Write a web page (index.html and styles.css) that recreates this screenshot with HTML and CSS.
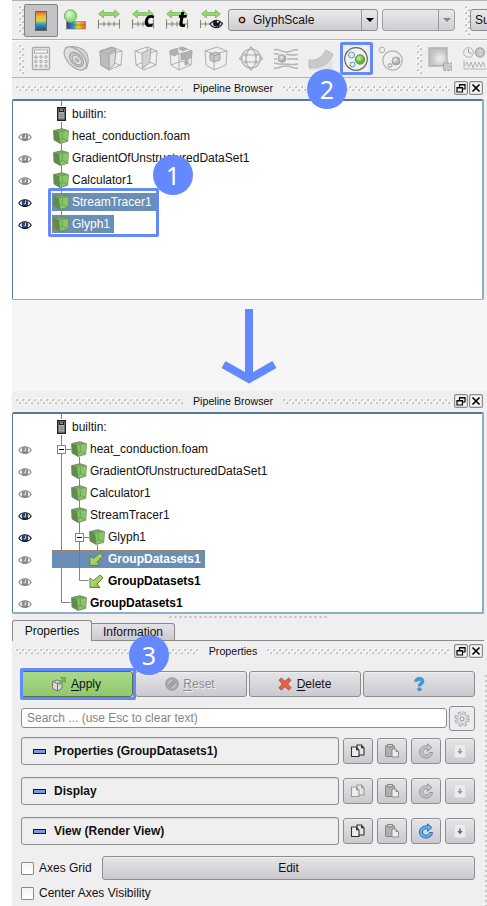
FILE: index.html
```html
<!DOCTYPE html>
<html lang="en">
<head>
<meta charset="utf-8">
<title>Pipeline Browser</title>
<link rel="stylesheet" href="styles.css">
</head>
<body>
<svg class="defs" width="0" height="0">
  <defs>
    <linearGradient id="rainbow" x1="0" y1="0" x2="0" y2="1"><stop offset="0" stop-color="#e85a2c"/><stop offset=".25" stop-color="#f5b53c"/><stop offset=".48" stop-color="#c9d84e"/><stop offset=".68" stop-color="#2aa0b8"/><stop offset="1" stop-color="#2c3c9c"/></linearGradient>
    <linearGradient id="rainbowH"><stop offset="0" stop-color="#2c3c9c"/><stop offset=".35" stop-color="#2a90c8"/><stop offset=".6" stop-color="#e8d040"/><stop offset="1" stop-color="#e8602c"/></linearGradient>
    <linearGradient id="greenArrow" x1="0" y1="0" x2="1" y2="1"><stop offset="0" stop-color="#c6ec86"/><stop offset="1" stop-color="#86b83c"/></linearGradient>
    <radialGradient id="steel" cx=".6" cy=".6"><stop offset="0" stop-color="#f0f0f0"/><stop offset="1" stop-color="#c2c2c2"/></radialGradient>
    <radialGradient id="ball" cx=".4" cy=".35"><stop offset="0" stop-color="#c4f5a0"/><stop offset="1" stop-color="#58b038"/></radialGradient>
    <radialGradient id="paleBall" cx=".4" cy=".35"><stop offset="0" stop-color="#dcffd0"/><stop offset="1" stop-color="#90d878"/></radialGradient>
    <radialGradient id="grayBall" cx=".4" cy=".35"><stop offset="0" stop-color="#eeeeee"/><stop offset="1" stop-color="#aaaaaa"/></radialGradient>
  </defs>
  <symbol id="cube" viewBox="0 0 16 16">
    <path d="M.6 2.600 9 .7l6.400 2-.7 10.600L7 15.400 1 12z" fill="#5f8c4b" stroke="#71876a" stroke-width=".9"/>
    <path d="M.9 2.800 9 1l6 1.800L5.800 4.600z" fill="#78a85e"/>
    <path d="M5.800 4.600 15.200 3l-.6 10.100L7 15.100z" fill="#86c865"/>
    <path d="M5.800 4.600 7 15M5.800 4.600.9 2.800M9.300 4.500v6l5 2M9.300 10.500 7 12" fill="none" stroke="#5f8c4b" stroke-width=".7"/>
  </symbol>
  <symbol id="server" viewBox="0 0 9 14">
    <path d="M.7.700h7.600v12.600H.7z" fill="#aaa" stroke="#222" stroke-width="1.400"/>
    <path d="M2 2h5v3H2z" fill="#222"/><path d="M3 2.600h3v1H3z" fill="#ddd"/><path d="M2.500 7.500h4M2.500 9.500h4M2.500 11.500h4" stroke="#777" stroke-width=".8"/>
  </symbol>
  <symbol id="eye" viewBox="0 0 14 10">
    <path d="M.8 5.200C3.500.6 10.500.6 13.200 5.200 10.500 9.400 3.500 9.400.8 5.200z" fill="#fff" stroke="currentColor" stroke-width="1.100"/>
    <circle cx="7" cy="5" r="3.300" fill="var(--iris)"/><path d="M7.500 2.500v3.300H5.700" stroke="#fff" stroke-width=".9" fill="none" opacity=".8"/><path d="M4 7.300c2 1.200 4 1.200 6 0" stroke="currentColor" fill="none"/>
  </symbol>
  <symbol id="branch" viewBox="0 0 15 15">
    <path d="M11 1 14 4 8 10l3 3.500H1V4l3.200 2.700z" fill="url(#greenArrow)" stroke="#64823a"/>
  </symbol>
  <symbol id="range" viewBox="0 0 24 22">
    <path d="M1.500 5 6.500 1v2.500h11V1L22.500 5l-5 4V6.500h-11V9z" fill="#8cdc66" stroke="#86ac78" stroke-width=".8"/>
    <path d="M1.500 10.500v9M22.500 10.500v9M1 15h22M7 12.500v5M12 12.500v5M17 12.500v5" stroke="#85857a" stroke-width="1.100" fill="none"/>
  </symbol>
  <symbol id="dock" viewBox="0 0 14 14">
    <rect x=".6" y=".6" width="12.800" height="12.800" rx="1.500" fill="#f3f3f3" stroke="#8a8a8a" stroke-width="1.200"/>
    <path d="M5.500 6V3.500h5.500V8H8.800M5.500 3.800H11M3 6.500h5.500v4.500H3zM3 6.900h5.500" fill="none" stroke="#000" stroke-width="1.200"/>
  </symbol>
  <symbol id="close" viewBox="0 0 14 14">
    <rect x=".6" y=".6" width="12.800" height="12.800" rx="1.500" fill="#f3f3f3" stroke="#8a8a8a" stroke-width="1.200"/>
    <path d="M3.500 3.500l7 7M10.500 3.500l-7 7" stroke="#000" stroke-width="1.700"/>
  </symbol>
  <symbol id="copy" viewBox="0 0 16 16">
    <path d="M7 2h4.500l2.500 3v7H7z" fill="#e5e5e2" stroke="currentColor" stroke-width="1.100"/><path d="M11 2v3.200h3z" fill="currentColor"/>
    <path d="M1.500 4h4.500l3 3v6.500H1.500z" fill="#eeeeea" stroke="currentColor" stroke-width="1.100"/><path d="M6 4v3.200h3z" fill="currentColor"/>
  </symbol>
  <symbol id="paste" viewBox="0 0 16 16">
    <rect x="1.500" y="2.500" width="9" height="11" rx="1" fill="#b0b0b0" stroke="#858585"/><path d="M3.500 1.500h5v2.500h-5z" fill="#ccc" stroke="#858585"/>
    <path d="M8 6h3.500l3 3v5H8z" fill="#eee" stroke="#8c8c8c" stroke-width="1"/><path d="M11.500 6v3h3z" fill="#8c8c8c"/>
  </symbol>
  <symbol id="reload" viewBox="0 0 16 16">
    <path d="M9.500.8v2C5 2.500 1.500 5 1.500 9s3 6 6.500 6 6.300-2.300 6.500-5.500h-3c-.3 1.800-1.600 2.700-3.400 2.700-2 0-3.500-1.300-3.500-3.200 0-2.300 2-3.600 4.900-3.300v2.600L14 4.600z" fill="var(--fill)" stroke="var(--edge)" stroke-width=".9"/>
  </symbol>
  <symbol id="save" viewBox="0 0 12 14">
    <path d="M.5.500h11v13H.5z" fill="#ececee" stroke="#dcdcdf"/><path d="M5.200 4.500h1.600v2.500h2L6 10.300 3.200 7h2z" fill="currentColor"/>
  </symbol>
</svg>

<div class="app">
  <div class="toolbar toolbar-top">
    <span class="grip"></span>
    <span class="toggle"><svg width="12" height="20"><rect x=".5" y=".5" width="11" height="19" fill="url(#rainbow)" stroke="#666"/></svg></span>
    <span class="cell"><svg width="24" height="22" viewBox="0 0 24 22"><rect x="3.500" y="12.500" width="19" height="7.500" fill="url(#rainbowH)" stroke="#8a7a60" stroke-width=".6"/><path d="M3.500 16h19" stroke="#555" stroke-width=".5"/><circle cx="7.500" cy="7" r="6.200" fill="url(#paleBall)" stroke="#7ab070"/></svg></span>
    <span class="cell"><svg width="24" height="22"><use href="#range"/></svg></span>
    <span class="cell"><svg width="24" height="22"><use href="#range"/></svg><b class="mark">c</b></span>
    <span class="cell"><svg width="24" height="22"><use href="#range"/></svg><b class="mark">t</b></span>
    <span class="cell"><svg width="24" height="22" viewBox="0 0 24 22"><path d="M2.500 5 7.500 1v2.500h9V1l5 4-5 4V6.500h-9V9z" fill="#8cdc66" stroke="#86ac78" stroke-width=".8"/><path d="M1.500 11v8M1 15h10M6.500 12.500v5" stroke="#85857a" fill="none"/><path d="M11 15c3-4.500 9-4.500 12.500-.5-3 5.500-9.500 5.500-12.500.5z" fill="#ddd" stroke="#222" stroke-width="1.200"/><circle cx="17.500" cy="14.300" r="3.500" fill="#181818"/><circle cx="18.800" cy="12.800" r="1" fill="#fff"/></svg></span>
    <span class="combo combo-main"><svg class="dot" width="8" height="8"><circle cx="4" cy="4" r="2.700" fill="#ffb97a" stroke="#2c1a10" stroke-width="1.300"/></svg><span class="combo-text">GlyphScale</span><i class="drop"></i></span>
    <span class="combo combo-empty"><span class="combo-text"></span><i class="drop drop-off"></i></span>
    <span class="grip grip-mid"></span>
    <span class="combo combo-cut">Su</span>
  </div>

  <div class="toolbar toolbar-filters">
    <span class="grip"></span>
    <span class="cell"><svg width="20" height="26" viewBox="0 0 20 26"><rect x="1.500" y="1.500" width="17" height="22" rx="1" fill="#eee" stroke="#aaa" stroke-width="1.300"/><rect x="3.500" y="4" width="13" height="3" fill="#fff" stroke="#aaa"/><g fill="#fff" stroke="#aaa"><path d="M4 10h2v2H4zM9 10h2v2H9zM14 10h2v2h-2zM4 14.500h2v2H4zM9 14.500h2v2H9zM14 14.500h2v2h-2zM4 19h2v2H4zM9 19h2v2H9zM14 19h2v2h-2z"/></g></svg></span>
    <span class="cell"><svg width="26" height="26" viewBox="0 0 26 26"><path d="M2 2C8-1 19 1 23 6c3 5 3 12 0 17z" fill="#d2d2d2" stroke="#a4a4a4"/><ellipse cx="12.300" cy="12.500" rx="8" ry="14" transform="rotate(-43 12.300 12.500)" fill="#dedede" stroke="#a0a0a0"/><ellipse cx="13.500" cy="13.500" rx="5.500" ry="8.500" transform="rotate(-43 13.500 13.500)" fill="#c6c6c6" stroke="#a0a0a0"/><ellipse cx="14" cy="14" rx="3.500" ry="5.500" transform="rotate(-43 14 14)" fill="#e4e4e4" stroke="#a0a0a0"/><ellipse cx="14" cy="14" rx="1.300" ry="2.500" transform="rotate(-43 14 14)" fill="#bbb" stroke="#a0a0a0" stroke-width=".7"/></svg></span>
    <span class="cell"><svg width="24" height="26" viewBox="0 0 24 26"><path d="M1 5 13 1l10 4-1 14-12 5-8-5z" fill="#efefef" stroke="#b0b0b0"/><path d="M1 5 13 1.500l4 2L15 17l-5 7-8-5z" fill="#bcbcbc" stroke="#a4a4a4"/><path d="M10 7.500l7-3.500L15.500 18l-5.500 6z" fill="#dcdcdc" stroke="#a4a4a4"/><path d="M1 5l9 3 13-3M10 8v16M15.500 17l6.500 2.500" fill="none" stroke="#b0b0b0"/></svg></span>
    <span class="cell"><svg width="24" height="26" viewBox="0 0 24 26"><path d="M1 5 13 1l10 4-1 14-12 5-8-5zM1 5l9 3 13-3M10 8v16M13 1v14l9 4M13 15 2 19" fill="#efefef" stroke="#b0b0b0"/><path d="M8 7l9-4-1.500 14-7 5z" fill="#d2d2d2" stroke="#a4a4a4" opacity=".9"/></svg></span>
    <span class="cell"><svg width="24" height="26" viewBox="0 0 24 26"><path d="M1 5 13 1l10 4-1 14-12 5-8-5zM1 5l9 3 13-3M10 8v16M13 15l9 4M13 15 2 19" fill="#efefef" stroke="#b0b0b0"/><path d="M1 4.500l6-1.500 2 1v4l-4 2-4-2zM12 8l11-3.500-1 7-3 1.500v5l-3 1v-6l-4 1zM10 3l3-1.500 5 1.500-4 2z" fill="#b2b2b2" stroke="#a0a0a0" stroke-width=".7"/></svg></span>
    <span class="cell"><svg width="24" height="26" viewBox="0 0 24 26"><path d="M1 5 13 1l10 4-1 14-12 5-8-5zM1 5l9 3 13-3M10 8v16" fill="#efefef" stroke="#b0b0b0"/><path d="M6 8l6-2 4 2v6l-6 2-4-2z" fill="#cacaca" stroke="#a0a0a0"/><path d="M6 8l4 1.500L16 8M10 9.500V16" fill="none" stroke="#a0a0a0"/></svg></span>
    <span class="cell"><svg width="26" height="26" viewBox="0 0 26 26"><g fill="none" stroke="#b0b0b0" stroke-width="1.200"><circle cx="13" cy="12.500" r="9.500"/><ellipse cx="13" cy="12.500" rx="5" ry="9.500"/><path d="M4 9h18M4 16h18"/></g><g fill="#e4e4e4" stroke="#a4a4a4"><path d="M13 .5l2 2.700h-4zM13 24.500l2-2.700h-4zM1 12.500l2.700-2v4zM25 12.500l-2.700-2v4z"/><circle cx="8" cy="9" r="1.200"/><circle cx="18" cy="9" r="1.200"/><circle cx="8" cy="16" r="1.200"/><circle cx="18" cy="16" r="1.200"/></g></svg></span>
    <span class="cell"><svg width="26" height="24" viewBox="0 0 26 24"><g fill="none" stroke="#b4b4b4" stroke-width="1.500"><path d="M1 3c4-2 7 2 12 2s7-3 12-2M1 7c3-1 4 0 5 .5M13 7c4 1.500 7 1 12 .5M1 12h3M14 12h11M1 16c5 1 6 1.500 9 1s9 1.500 15 0M1 21c4 1 7-2 12-2s7 3 12 2"/></g><circle cx="9" cy="11.500" r="3.800" fill="url(#grayBall)" stroke="#a4a4a4"/></svg></span>
    <span class="cell"><svg width="26" height="24" viewBox="0 0 26 24"><path d="M1 14h24v9H1z" fill="#e3e3e3"/><path d="M1 13c7 1 13-2 17-10l7 4c-2 8-9 14-24 14z" fill="#cacaca" stroke="#bcbcbc"/></svg></span>
    <span class="cell"><svg width="26" height="26" viewBox="0 0 26 26"><circle cx="13" cy="13" r="11.300" fill="#f2f2ee" stroke="#67675a" stroke-width="1.200"/><circle cx="8.500" cy="9" r="3" fill="#d6effc" stroke="#6a94ae"/><circle cx="9.500" cy="18.500" r="2.500" fill="#d6effc" stroke="#6a94ae"/><circle cx="17" cy="13.500" r="4.700" fill="url(#ball)" stroke="#589044"/></svg></span>
    <span class="cell"><svg width="26" height="26" viewBox="0 0 26 26"><circle cx="14.500" cy="14.500" r="9.700" fill="#efefef" stroke="#b0b0b0" stroke-width="1.200"/><circle cx="4" cy="4" r="2.800" fill="#eee" stroke="#b0b0b0"/><circle cx="12" cy="19.500" r="2" fill="#ddd" stroke="#a4a4a4"/><circle cx="18" cy="15" r="4" fill="url(#grayBall)" stroke="#a4a4a4"/></svg></span>
    <span class="grip grip-end"></span>
    <span class="cell"><svg width="26" height="26" viewBox="0 0 26 26"><path d="M2 2h18v18H2z" fill="url(#steel)" stroke="#b0b0b0" stroke-width="1.300"/><path d="M16.500 17h8v7.500h-8z" fill="#c8c8c8" stroke="#999" stroke-dasharray="2 1.500"/></svg></span>
    <span class="cell"><svg width="26" height="26" viewBox="0 0 26 26"><circle cx="6.500" cy="6.500" r="4.800" fill="#eee" stroke="#b0b0b0"/><path d="M6.500 3v3.500l3 1" fill="none" stroke="#999"/><circle cx="18" cy="6.500" r="4.800" fill="#bbb" stroke="#a4a4a4"/><path d="M15 5h6M15 8h6M18 2.500v8" stroke="#ddd"/><path d="M2 14v9h24M3 20l2-4 2 5 2-5 2 6 2-6 2 5 2-5 2 5 2-5 2 5" fill="none" stroke="#b4b4b4"/></svg></span>
  </div>

  <div class="dock-title"><span class="ridge"></span><span class="title-text">Pipeline Browser</span><span class="ridge"></span><svg width="14" height="14"><use href="#dock"/></svg><svg width="14" height="14"><use href="#close"/></svg></div>

  <div class="tree">
    <svg class="links" width="100" height="190"><path d="M48.500 0v120" fill="none" stroke="#848484"/></svg>
    <div class="row"><span class="eye"></span><span class="item"><svg class="srv" width="9" height="14"><use href="#server"/></svg>builtin:</span></div>
    <div class="row"><svg class="eye" width="14" height="10"><use href="#eye"/></svg><span class="item"><svg width="16" height="16"><use href="#cube"/></svg>heat_conduction.foam</span></div>
    <div class="row"><svg class="eye" width="14" height="10"><use href="#eye"/></svg><span class="item"><svg width="16" height="16"><use href="#cube"/></svg>GradientOfUnstructuredDataSet1</span></div>
    <div class="row"><svg class="eye" width="14" height="10"><use href="#eye"/></svg><span class="item"><svg width="16" height="16"><use href="#cube"/></svg>Calculator1</span></div>
    <div class="row"><svg class="eye on" width="14" height="10"><use href="#eye"/></svg><span class="item picked"><svg width="16" height="16"><use href="#cube"/></svg>StreamTracer1</span></div>
    <div class="row"><svg class="eye on" width="14" height="10"><use href="#eye"/></svg><span class="item picked focus"><svg width="16" height="16"><use href="#cube"/></svg>Glyph1</span></div>
  </div>

  <div class="between"><svg width="56" height="76" viewBox="0 0 56 76"><path d="M28 0v70M2.500 55.500 28 70l25.500-14.500" fill="none" stroke="#6489ff" stroke-width="8"/></svg></div>

  <div class="dock-title"><span class="ridge"></span><span class="title-text">Pipeline Browser</span><span class="ridge"></span><svg width="14" height="14"><use href="#dock"/></svg><svg width="14" height="14"><use href="#close"/></svg></div>

  <div class="tree tree-grouped">
    <svg class="links" width="110" height="198"><path d="M48.500 0v188.500h9M52 35.500h6M66.500 43v80M66.500 123v43.500h9M70 123.500h6M84.500 131v8" fill="none" stroke="#848484"/></svg>
    <div class="row"><span class="eye"></span><span class="item"><svg class="srv" width="9" height="14"><use href="#server"/></svg>builtin:</span></div>
    <div class="row"><svg class="eye" width="14" height="10"><use href="#eye"/></svg><span class="item deep1"><i class="fold"></i><svg width="16" height="16"><use href="#cube"/></svg>heat_conduction.foam</span></div>
    <div class="row"><svg class="eye" width="14" height="10"><use href="#eye"/></svg><span class="item deep1"><svg width="16" height="16"><use href="#cube"/></svg>GradientOfUnstructuredDataSet1</span></div>
    <div class="row"><svg class="eye" width="14" height="10"><use href="#eye"/></svg><span class="item deep1"><svg width="16" height="16"><use href="#cube"/></svg>Calculator1</span></div>
    <div class="row"><svg class="eye on" width="14" height="10"><use href="#eye"/></svg><span class="item deep1"><svg width="16" height="16"><use href="#cube"/></svg>StreamTracer1</span></div>
    <div class="row"><svg class="eye on" width="14" height="10"><use href="#eye"/></svg><span class="item deep2"><i class="fold"></i><svg width="16" height="16"><use href="#cube"/></svg>Glyph1</span></div>
    <div class="row"><svg class="eye" width="14" height="10"><use href="#eye"/></svg><span class="item deep2 strong picked focus"><i class="trunk"></i><svg width="15" height="15"><use href="#branch"/></svg>GroupDatasets1</span></div>
    <div class="row"><svg class="eye" width="14" height="10"><use href="#eye"/></svg><span class="item deep2 strong"><svg width="15" height="15"><use href="#branch"/></svg>GroupDatasets1</span></div>
    <div class="row"><svg class="eye" width="14" height="10"><use href="#eye"/></svg><span class="item deep1 strong"><svg width="16" height="16"><use href="#cube"/></svg>GroupDatasets1</span></div>
  </div>

  <div class="splitter"></div>
  <div class="tabs"><span class="tab active">Properties</span><span class="tab">Information</span><span class="tab-rest"></span></div>
  <div class="dock-title props-title"><span class="ridge"></span><span class="title-text">Properties</span><span class="ridge"></span><svg width="14" height="14"><use href="#dock"/></svg><svg width="14" height="14"><use href="#close"/></svg></div>

  <div class="panel">
    <div class="form">
      <div class="actions">
        <span class="btn apply"><svg width="16" height="16" viewBox="0 0 16 16"><path d="M1.500 5.500 6 4l5 1.500v7L6.500 15l-5-2.500z" fill="#d9d9cf" stroke="#777766"/><path d="M1.500 5.500l5 2 4.500-2M6.500 7.500V15" fill="none" stroke="#777766"/><path d="M7.500 7.500l4-4-2-2h5v5l-1.800-1.800-4 4z" fill="#68c254" stroke="#559548" stroke-width=".7"/></svg><span><u>A</u>pply</span></span>
        <span class="btn reset"><svg width="14" height="14" viewBox="0 0 14 14"><circle cx="7" cy="7" r="6.300" fill="#aaa" stroke="#999"/><circle cx="7" cy="7" r="3.900" fill="#c4c4c4"/><path d="M3.500 9l5.500-5.500M5 10.500 10.500 5" stroke="#8f8f8f" stroke-width="1.400"/></svg><span><u>R</u>eset</span></span>
        <span class="btn delete"><svg width="14" height="14" viewBox="0 0 14 14"><path d="M1 3.300 3.300 1 7 4.400 10.700 1 13 3.300 9.600 7l3.400 3.700L10.700 13 7 9.600 3.300 13 1 10.700 4.400 7z" fill="#f0603e" stroke="#9c5444"/></svg><span><u>D</u>elete</span></span>
        <span class="btn"><svg width="11" height="15" viewBox="0 0 12 16"><path d="M2.200 5C2 .8 9.500.8 9.300 4.700 9.200 7.200 6 6.800 6 10" fill="none" stroke="#6c8296" stroke-width="4"/><path d="M2.200 5C2 .8 9.500.8 9.300 4.700 9.200 7.200 6 6.800 6 10" fill="none" stroke="#28a4ee" stroke-width="2.700"/><ellipse cx="6" cy="13.300" rx="2.200" ry="1.700" fill="#28a4ee" stroke="#6c8296" stroke-width=".8"/></svg></span>
      </div>
      <div class="search-line">
        <div class="search">Search ... (use Esc to clear text)</div>
        <span class="btn gear"><svg width="16" height="16" viewBox="0 0 16 16"><circle cx="8" cy="8" r="6.200" fill="none" stroke="#9aa3aa" stroke-width="3" stroke-dasharray="3 1.870"/><circle cx="8" cy="8" r="5.200" fill="#dde2e6" stroke="#9aa3aa" stroke-width=".8"/><circle cx="8" cy="8" r="5.900" fill="none" stroke="#dde2e6" stroke-width="2" stroke-dasharray="1.700 2.934" stroke-dashoffset="-.6"/><circle cx="8" cy="8" r="2" fill="#f7f7f7" stroke="#8d949a"/></svg></span>
      </div>
      <div class="group"><div class="group-head"><i class="minus"></i>Properties (GroupDatasets1)</div><span class="btn tool dark"><svg width="16" height="16"><use href="#copy"/></svg></span><span class="btn tool"><svg width="16" height="16"><use href="#paste"/></svg></span><span class="btn tool"><svg width="16" height="16"><use href="#reload"/></svg></span><span class="btn tool"><svg width="12" height="14"><use href="#save"/></svg></span></div>
      <div class="group"><div class="group-head"><i class="minus"></i>Display</div><span class="btn tool"><svg width="16" height="16"><use href="#copy"/></svg></span><span class="btn tool"><svg width="16" height="16"><use href="#paste"/></svg></span><span class="btn tool"><svg width="16" height="16"><use href="#reload"/></svg></span><span class="btn tool"><svg width="12" height="14"><use href="#save"/></svg></span></div>
      <div class="group"><div class="group-head"><i class="minus"></i>View (Render View)</div><span class="btn tool dark"><svg width="16" height="16"><use href="#copy"/></svg></span><span class="btn tool"><svg width="16" height="16"><use href="#paste"/></svg></span><span class="btn tool blue"><svg width="16" height="16"><use href="#reload"/></svg></span><span class="btn tool mid"><svg width="12" height="14"><use href="#save"/></svg></span></div>
      <div class="option"><i class="check"></i><span class="option-text">Axes Grid</span><span class="btn edit">Edit</span></div>
      <div class="option last"><i class="check"></i><span class="option-text">Center Axes Visibility</span></div>
    </div>
    <div class="edge"></div>
  </div>

  <div class="outline outline-tree"></div>
  <div class="outline outline-filter"></div>
  <div class="outline outline-apply"></div>
  <div class="badge badge-one">1</div>
  <div class="badge badge-two">2</div>
  <div class="badge badge-three">3</div>
</div>
</body>
</html>
```
FILE: styles.css
```css
* { box-sizing: border-box; }
body {
  margin: 0;
  background: #fff;
  font: 12px/14px "Liberation Sans", Arial, sans-serif;
  color: #111;
  overflow: hidden;
}
svg { display: block; flex: none; }
.defs { position: absolute; }
.app {
  position: relative;
  width: 475px;
  height: 906px;
  margin-left: 12px;
  background: #efefef;
  overflow: hidden;
}

/* toolbars */
.toolbar { display: flex; align-items: center; padding-left: 6px; border-bottom: 1px solid #b4b4b4; }
.toolbar-top { height: 40px; border-top: 1px solid #b4b4b4; box-shadow: 0 1px #fafafa; }
.toolbar-filters { height: 38px; }
.grip {
  flex: none;
  width: 6px;
  height: 30px;
  background:
    radial-gradient(circle at 2px 2px, #c6c6c6 1px, transparent 1.300px) 0 0 / 6px 6px,
    radial-gradient(circle at 5px 5px, #c6c6c6 1px, transparent 1.300px) 0 0 / 6px 6px,
    radial-gradient(circle at 1px 1px, #fff 1px, transparent 1.300px) 0 0 / 6px 6px,
    radial-gradient(circle at 4px 4px, #fff 1px, transparent 1.300px) 0 0 / 6px 6px;
}
.grip-mid { margin: 0 0 0 9px; }
.toolbar-filters .grip { margin-right: -1px; }
.toolbar-filters .grip-end { margin: 0 0 0 8px; }
.toggle {
  flex: none;
  display: flex;
  align-items: center;
  justify-content: center;
  width: 34px;
  height: 33px;
  margin-top: 1px;
  border: 1px solid #858585;
  border-radius: 2px;
  background: #c3c3c7;
}
.cell { position: relative; flex: none; display: flex; align-items: center; justify-content: center; width: 34px; }
.toolbar-filters .cell { width: 35px; }
.mark { position: absolute; left: 18px; top: -2px; font: italic bold 22px/26px "DejaVu Sans", sans-serif; color: #000; transform: scaleX(.8); transform-origin: left; }
.combo {
  flex: none;
  display: flex;
  align-items: center;
  height: 22px;
  border: 1px solid #8d8d8d;
  border-radius: 3px;
  background: linear-gradient(#e9e9ed, #cdcdd3);
}
.combo-main { width: 150px; padding-left: 9px; }
.combo-main .combo-text { padding-left: 7px; }
.combo-text { flex: 1; }
.combo-empty { width: 73px; margin-left: 4px; border-color: #a0a0a0; }
.combo-cut { width: 40px; margin-left: 0; padding-left: 4px; }
.drop { display: flex; justify-content: center; align-items: center; width: 16px; height: 20px; border-left: 1px solid #999; }
.drop::after { content: ""; border: 4px solid transparent; border-top-color: #000; border-bottom: 0; }
.drop-off::after { border-top-color: #858585; }

/* dock headers */
.dock-title { display: flex; align-items: center; height: 21px; padding: 0 4px 2px 3px; font-size: 10.670px; background: #efefef; }
.title-text { padding: 0 9px 0 10px; white-space: nowrap; }
.ridge {
  flex: 1;
  height: 6px;
  background:
    radial-gradient(circle at 2px 2px, #c6c6c6 1px, transparent 1.300px) 0 0 / 6px 6px,
    radial-gradient(circle at 5px 5px, #c6c6c6 1px, transparent 1.300px) 0 0 / 6px 6px,
    radial-gradient(circle at 1px 1px, #fff 1px, transparent 1.300px) 0 0 / 6px 6px,
    radial-gradient(circle at 4px 4px, #fff 1px, transparent 1.300px) 0 0 / 6px 6px;
}
.dock-title svg { margin-left: 1px; }
.dock-title .ridge + svg { margin-left: 4px; }

/* pipeline trees */
.tree {
  position: relative;
  width: 472px;
  height: 201px;
  padding-top: 2px;
  border: 1px solid #8fadc9;
  border-top: 2px solid #55799c;
  border-left-color: #55799c;
  border-right-width: 2px;
  border-radius: 2px;
  background: #fff;
}
.tree-grouped { border-bottom-width: 2px; height: 202px; }
.links { position: absolute; left: 0; top: 0; }
.row { position: relative; display: flex; align-items: center; height: 22px; padding-left: 5px; }
.eye { --iris: #8c8c8c; flex: none; width: 14px; margin-top: 2px; color: #858585; }
.eye.on { --iris: #27406e; color: #10141c; }
.item { position: relative; display: flex; align-items: center; gap: 3px; height: 18px; margin-left: 20px; padding: 0 4px 0 1px; white-space: nowrap; }
.srv { margin: 0 3px 0 4px; box-shadow: 0 0 0 1px #fff; }
.deep1 { padding-left: 19px; }
.deep2 { padding-left: 37px; }
.strong { font-weight: bold; color: #000; }
.strong svg { margin-right: 1px; }
.deep1.strong svg { margin-right: 0; }
.picked { background: #6a8eb5; color: #fff; }
.focus { outline: 1px dotted #9a8265; outline-offset: -1px; }
.fold { position: absolute; left: 5px; top: 5px; width: 9px; height: 9px; border: 1px solid #858585; background: linear-gradient(#000, #000) 1px 3px / 5px 1px no-repeat #fff; }
.deep2 .fold { left: 23px; }
.trunk { position: absolute; left: 27px; top: 0; width: 1px; height: 18px; background: #777; }

.between { display: flex; justify-content: center; height: 91px; padding: 9px 0 0; background: #f6f6f6; }
.between svg { margin-left: -1px; }

/* properties dock */
.splitter {
  height: 6px;
  margin: 0 158px 0 157px;
  background: radial-gradient(circle at 1.500px 3px, #c2c2c2 1px, transparent 1.300px) 0 0 / 5px 6px;
}
.tabs { display: flex; align-items: flex-end; width: 472px; height: 21px; }
.tab { display: flex; align-items: center; justify-content: center; width: 83px; height: 18px; border: 1px solid #8b8b8b; border-left: 0; border-radius: 0 3px 0 0; background: linear-gradient(#e2e2e6, #cacacf); }
.tab.active { width: 80px; height: 21px; border: 1px solid #8b8b8b; border-bottom: 0; border-radius: 3px 3px 0 0; background: #efefef; }
.tab-rest { flex: 1; border-bottom: 1px solid #8b8b8b; }
.props-title { height: 20px; padding-bottom: 0; }
.panel { display: flex; justify-content: space-between; padding-left: 9px; }
.form { width: 454px; padding-top: 10px; }
.edge { width: 2px; height: 231px; margin-top: 14px; background: linear-gradient(#c6c6c6 2px, transparent 2px) 0 0 / 2px 5px; }
.btn {
  flex: none;
  display: flex;
  align-items: center;
  justify-content: center;
  border: 1px solid #8d8d8d;
  border-radius: 3px;
  background: linear-gradient(#e5e5e9, #c9c9cf);
  box-shadow: inset 0 1px #f0f0f2;
}
.actions { display: grid; grid-template-columns: repeat(4, 112px); gap: 2px; height: 26px; }
.actions .btn { gap: 4px; }
.actions .delete { gap: 5px; padding-right: 1px; }
.actions .apply { background: linear-gradient(#abd98c, #90c76c); box-shadow: none; border-color: #557048; padding-right: 2px; }
.actions .reset { color: #8c8c8c; text-shadow: 1px 1px #f2f2f2; padding-right: 2px; }
u { text-underline-offset: 2px; }
.search-line { display: flex; align-items: center; gap: 2px; height: 25px; margin-top: 9px; }
.search { width: 426px; height: 20px; margin-top: -1px; padding: 2px 5px; border: 1px solid #8d8d8d; border-radius: 3px; background: #fff; color: #858585; }
.gear { width: 26px; height: 25px; background: #ededf0; }
.group { display: flex; align-items: center; gap: 4px; height: 28px; margin-bottom: 12px; }
.search-line + .group { margin-top: 6px; }
.group-head { display: flex; align-items: center; width: 318px; height: 28px; padding-left: 11px; border: 1px solid #8d8d8d; border-radius: 3px; font-weight: bold; box-shadow: inset 0 1px #dedede; }
.minus { width: 13px; height: 5px; margin-right: 8px; border: 1px solid #101850; background: #7f98e4; }
.tool { --fill: #c2c2c2; --edge: #929292; width: 30px; height: 26px; color: #999; }
.tool.dark { color: #303030; }
.tool.mid { color: #686870; }
.tool.blue { --fill: #66aef4; --edge: #2c62a8; }
.option { display: flex; align-items: center; width: 454px; height: 24px; margin-top: -1px; }
.option.last { margin-top: 1px; }
.check { width: 13px; height: 13px; border: 1px solid #8b8b8b; border-radius: 1px; background: linear-gradient(#f4f4f4, #fff); }
.option-text { width: 63px; margin: -1px 0 0 5px; white-space: nowrap; }
.edit { flex: 1; height: 24px; }

/* step annotations */
.outline { position: absolute; border: 3px solid #6489ff; border-radius: 2px; }
.outline-tree { left: 36px; top: 188px; width: 111px; height: 49px; }
.outline-filter { left: 328px; top: 42px; width: 33px; height: 33px; }
.outline-apply { left: 8px; top: 668px; width: 116px; height: 32px; }
.badge { position: absolute; width: 40px; height: 40px; border-radius: 50%; background: #6489ff; color: #fff; text-align: center; font: 25px/40px "Noto Sans", sans-serif; }
.badge-one { left: 141px; top: 155px; }
.badge-two { left: 295px; top: 69px; }
.badge-three { left: 117px; top: 635px; }
```
